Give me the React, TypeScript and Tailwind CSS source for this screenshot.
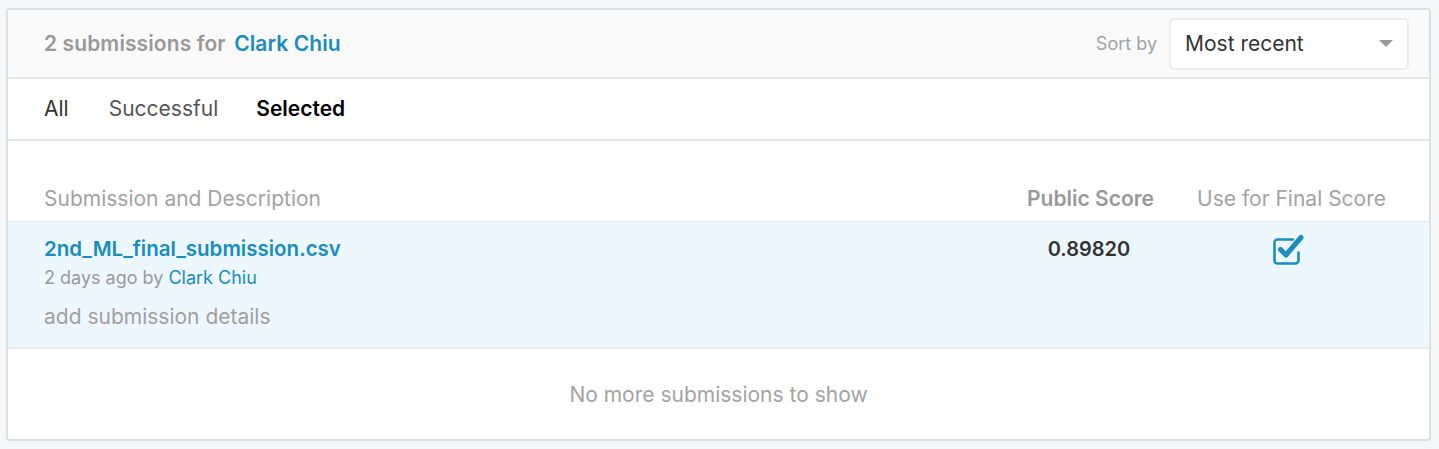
const font = { fontFamily: "Inter, 'Liberation Sans', sans-serif" };

function CheckSquare() {
  return (
    <svg width="34" height="33" viewBox="0 0 34 33" fill="none">
      <path
        d="M22 6.5H6.5a3 3 0 0 0-3 3v18a3 3 0 0 0 3 3h18a3 3 0 0 0 3-3v-8"
        stroke="#1b8dbf"
        strokeWidth="2.6"
        strokeLinecap="round"
      />
      <path
        d="M9.5 16.5l5.5 5.5L30 4.5"
        stroke="#1b8dbf"
        strokeWidth="5"
        strokeLinecap="round"
        strokeLinejoin="round"
      />
    </svg>
  );
}

export default function App() {
  return (
    <div className="min-h-[449px] bg-[#f4f6f7] pl-[6px] pt-[8px] pr-[8px]" style={font}>
      <div className="w-[1425px] overflow-hidden rounded-[4px] border-2 border-[#dedfe0] bg-white">
        {/* Header */}
        <div className="flex h-[69px] items-center justify-between border-b-2 border-[#e4e5e6] bg-[#fafafa] pl-[36px] pr-[20px]">
          <p className="text-[21px] font-semibold tracking-[0.1px] text-[#999]">
            2 submissions for <span className="ml-[3px] text-[#1a8cbf]">Clark Chiu</span>
          </p>
          <div className="flex items-center gap-[12px]">
            <span className="text-[18px] text-[#a3a3a3]">Sort by</span>
            <div className="flex h-[52px] w-[240px] items-center justify-between rounded-[5px] border-2 border-[#ececec] bg-white pl-[14px] pr-[14px]">
              <span className="text-[21px] text-[#333]">Most recent</span>
              <span className="h-0 w-0 border-x-[7px] border-t-[7px] border-x-transparent border-t-[#9a9a9a]" />
            </div>
          </div>
        </div>

        {/* Tabs */}
        <div className="flex h-[62px] items-center border-b-2 border-[#e4e5e6] pl-[36px] text-[21px]">
          <span className="text-[#333]">All</span>
          <span className="ml-[40px] text-[#555]">Successful</span>
          <span className="ml-[38px] font-semibold text-black">Selected</span>
        </div>

        {/* Column headers */}
        <div className="flex h-[81px] items-end border-b border-[#d9eaf2] pb-[7px] pl-[36px] pr-[43px] text-[21px]">
          <span className="flex-1 text-[#a3a3a3]">Submission and Description</span>
          <span className="w-[130px] shrink-0 text-right font-semibold text-[#999]">Public Score</span>
          <div className="ml-[40px] flex w-[192px] shrink-0 justify-end whitespace-nowrap text-[#a3a3a3]">
            Use for Final Score
          </div>
        </div>

        {/* Row */}
        <div className="flex h-[127px] border-b-2 border-[#e6eef1] bg-[#edf8fe] pl-[36px] pr-[43px] pt-[14px]">
          <div className="flex flex-1 flex-col">
            <span className="text-[20.5px] font-semibold leading-[26px] text-[#1a8cbf]">2nd_ML_final_submission.csv</span>
            <span className="mt-[4px] text-[18px] leading-[24px] text-[#999]">
              2 days ago by <span className="text-[#1a8cbf]">Clark Chiu</span>
            </span>
            <span className="mt-[14px] text-[21px] leading-[26px] text-[#a0a0a0]">add submission details</span>
          </div>
          <span className="w-[130px] shrink-0 text-center text-[20px] font-semibold leading-[26px] text-[#333]">0.89820</span>
          <div className="-mt-[3px] ml-[40px] flex w-[192px] shrink-0 justify-center pr-[4px]">
            <CheckSquare />
          </div>
        </div>

        {/* Footer */}
        <div className="flex h-[90px] items-center justify-center pt-[2px] text-[21px] text-[#a3a3a3]">
          No more submissions to show
        </div>
      </div>
    </div>
  );
}
